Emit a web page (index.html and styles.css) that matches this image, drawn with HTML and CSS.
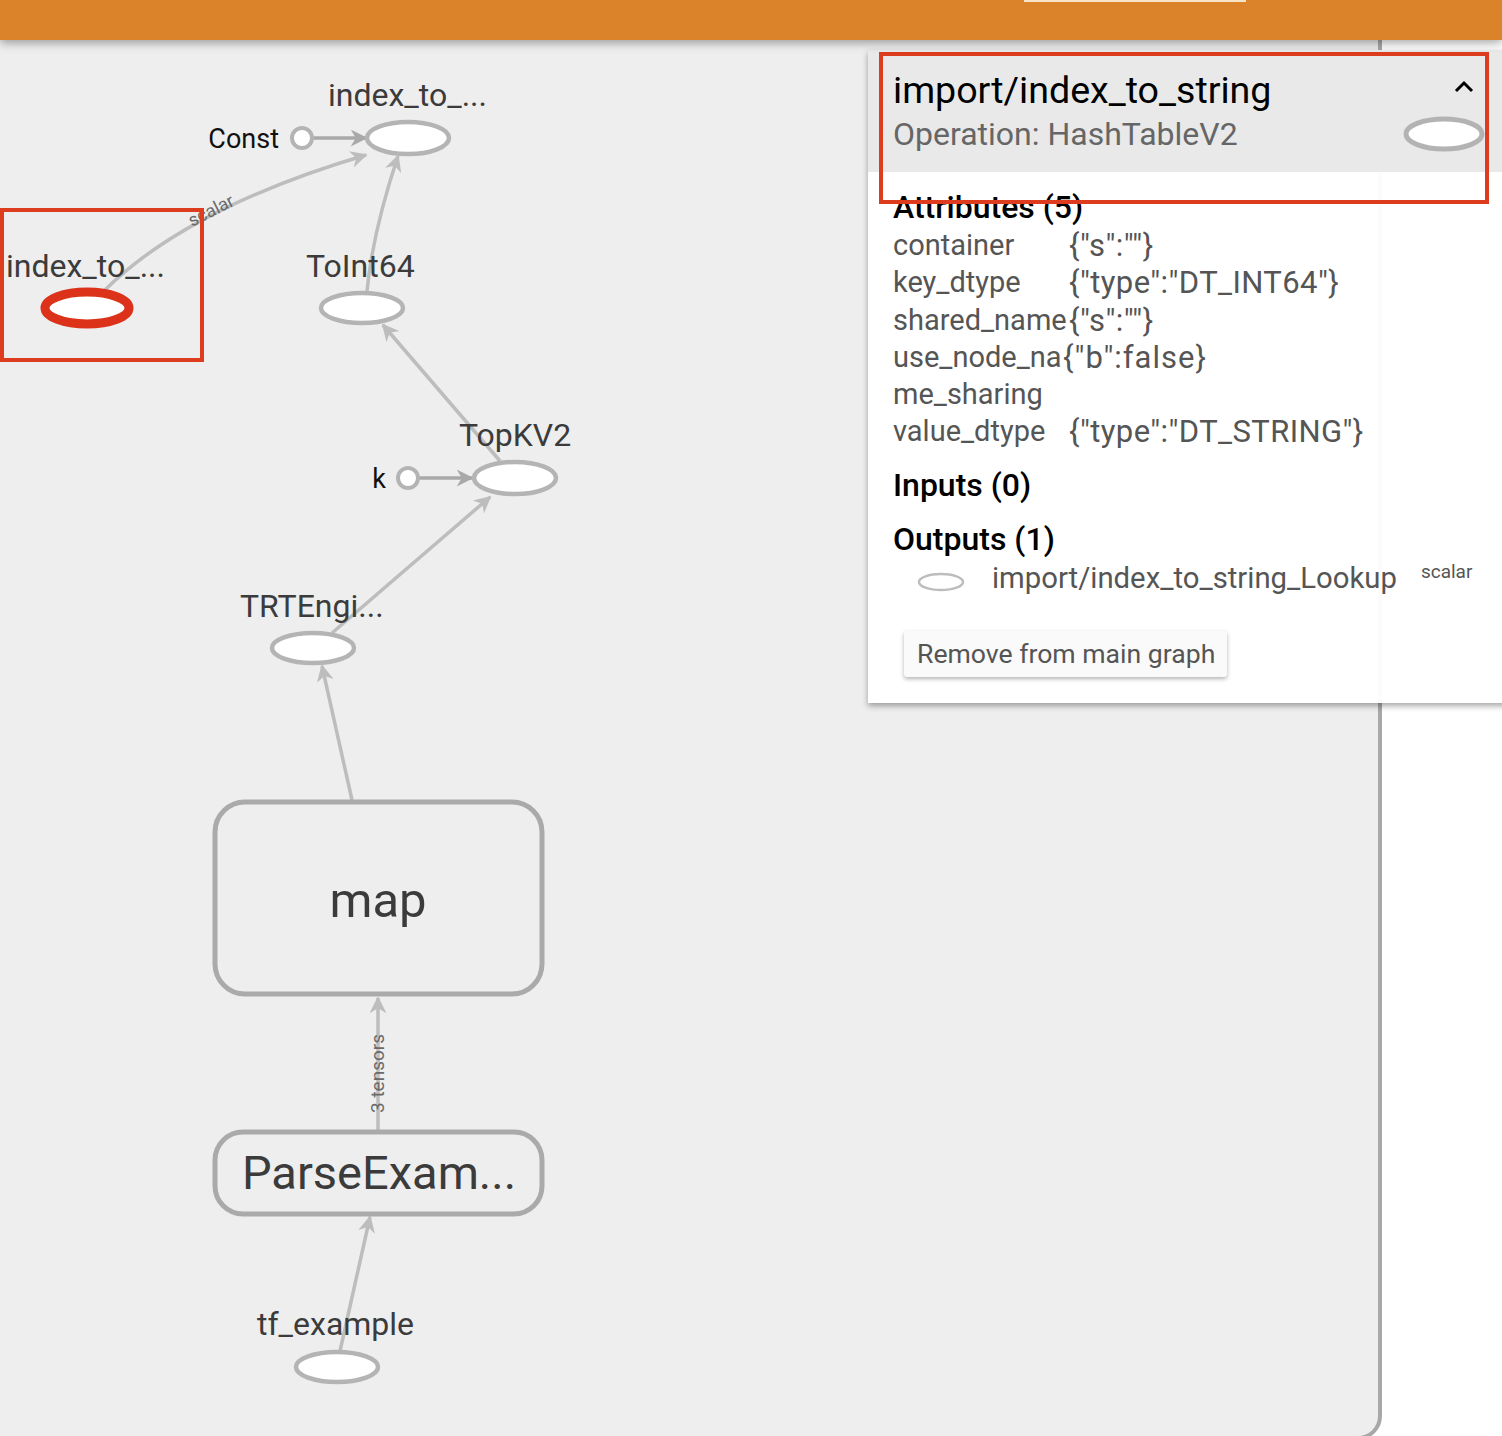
FILE: index.html
```html
<!DOCTYPE html>
<html>
<head>
<meta charset="utf-8">
<link rel="stylesheet" href="styles.css">
</head>
<body>
<div class="topbar"><div class="tab-mark"></div></div>
<div class="main">
  <div class="canvas">
    <svg class="graph" width="1378" height="1400" viewBox="0 40 1378 1400" xmlns="http://www.w3.org/2000/svg">
      <defs>
        <marker id="arr" viewBox="0 0 10 10" refX="9" refY="5" markerUnits="userSpaceOnUse" markerWidth="20" markerHeight="17" orient="auto">
          <path d="M0,0 L10,5 L0,10 L3,5 z" fill="#bdbdbd"/>
        </marker>
        <marker id="arrd" viewBox="0 0 10 10" refX="9" refY="5" markerUnits="userSpaceOnUse" markerWidth="20" markerHeight="17" orient="auto">
          <path d="M0,0 L10,5 L0,10 L3,5 z" fill="#a9a9a9"/>
        </marker>
      </defs>
      <g class="edges">
        <path d="M312,138 L366,138" class="edge dark" marker-end="url(#arrd)"/>
        <path d="M105,290 C150,245 230,195 366,155" class="edge" marker-end="url(#arr)"/>
        <path d="M367,291 C372,240 385,195 398,156" class="edge" marker-end="url(#arr)"/>
        <path d="M500,461 L383,325" class="edge" marker-end="url(#arr)"/>
        <path d="M418,478 L472,478" class="edge dark" marker-end="url(#arrd)"/>
        <path d="M332,633 L490,497" class="edge" marker-end="url(#arr)"/>
        <path d="M352,800 L322,666" class="edge" marker-end="url(#arr)"/>
        <path d="M378,1131 L378,998" class="edge" marker-end="url(#arr)"/>
        <path d="M340,1351 L370,1217" class="edge" marker-end="url(#arr)"/>
      </g>
      <text x="192" y="227" class="edge-label" transform="rotate(-27 192 227)">scalar</text>
      <text x="384" y="1113" class="edge-label tall" transform="rotate(-90 384 1113)">3 tensors</text>

      <text x="328" y="106" class="node-label">index_to_...</text>
      <ellipse cx="408" cy="138" rx="41" ry="16" class="op"/>
      <text x="279" y="148" class="const-label" text-anchor="end">Const</text>
      <circle cx="302" cy="138" r="10" class="const"/>

      <text x="6" y="277" class="node-label">index_to_...</text>
      <ellipse cx="87" cy="308" rx="42" ry="16" class="op selected"/>

      <text x="306" y="277" class="node-label">ToInt64</text>
      <ellipse cx="362" cy="308" rx="41" ry="15" class="op"/>

      <text x="459" y="446" class="node-label">TopKV2</text>
      <ellipse cx="515" cy="478" rx="41" ry="16" class="op"/>
      <text x="386" y="488" class="const-label" text-anchor="end">k</text>
      <circle cx="408" cy="478" r="10" class="const"/>

      <text x="240" y="617" class="node-label">TRTEngi...</text>
      <ellipse cx="313" cy="648" rx="41" ry="15" class="op"/>

      <rect x="215" y="802" width="327" height="192" rx="30" class="group"/>
      <text x="378" y="917" class="group-label big" text-anchor="middle">map</text>

      <rect x="215" y="1132" width="327" height="82" rx="28" class="group"/>
      <text x="379" y="1189" class="group-label" text-anchor="middle">ParseExam...</text>

      <text x="257" y="1335" class="node-label">tf_example</text>
      <ellipse cx="337" cy="1367" rx="41" ry="15" class="op"/>
    </svg>
    <div class="sel-box"></div>
  </div>
  <div class="rest"></div>

  <div class="info-panel">
    <div class="info-head">
      <div class="head-text">
        <div class="title">import/index_to_string</div>
        <div class="subtitle">Operation: HashTableV2</div>
      </div>
      <div class="head-side">
        <svg class="chevron" width="20" height="13" viewBox="0 0 20 13"><path d="M2,11 L10,3 L18,11" fill="none" stroke="#000" stroke-width="3"/></svg>
        <svg class="head-op" width="84" height="38" viewBox="0 0 84 38"><ellipse cx="42" cy="19" rx="38" ry="15" fill="#fff" stroke="#b3b3b3" stroke-width="5"/></svg>
      </div>
    </div>
    <div class="info-body">
      <div class="section-title first">Attributes (5)</div>
      <div class="attrs">
        <div class="attr-key">container</div><div class="attr-val">{"s":""}</div>
        <div class="attr-key">key_dtype</div><div class="attr-val">{"type":"DT_INT64"}</div>
        <div class="attr-key">shared_name</div><div class="attr-val">{"s":""}</div>
        <div class="attr-key">use_node_name_sharing</div><div class="attr-val tight">{"b":false}</div>
        <div class="attr-key">value_dtype</div><div class="attr-val">{"type":"DT_STRING"}</div>
      </div>
      <div class="section-title">Inputs (0)</div>
      <div class="section-title outputs">Outputs (1)</div>
      <div class="output-row">
        <svg class="out-op" width="50" height="22" viewBox="0 0 50 22"><ellipse cx="25" cy="11" rx="22" ry="8" fill="#fff" stroke="#bdbdbd" stroke-width="2.5"/></svg>
        <span class="out-name">import/index_to_string_Lookup</span>
        <span class="out-type">scalar</span>
      </div>
      <button class="remove-btn">Remove from main graph</button>
    </div>
    <div class="head-highlight"></div>
  </div>
</div>
</body>
</html>
```

FILE: styles.css
```css
html, body {
  margin: 0;
  padding: 0;
  background: #ffffff;
  font-family: Roboto, "Liberation Sans", sans-serif;
  overflow: hidden;
}

.topbar {
  height: 40px;
  background: #da832a;
  position: relative;
  z-index: 3;
  box-shadow: 0 3px 9px rgba(0, 0, 0, 0.35);
}

.tab-mark {
  position: absolute;
  left: 1024px;
  top: 0;
  width: 222px;
  height: 2px;
  background: #f7e3c6;
}

.main {
  display: flex;
  position: relative;
  height: 1396px;
}

.canvas {
  position: relative;
  width: 1378px;
  height: 1396px;
  background: #eeeeee;
  border-right: 4px solid #a8a8a8;
  border-bottom: 4px solid #a8a8a8;
  border-bottom-right-radius: 24px;
  box-sizing: content-box;
  overflow: hidden;
}

.graph {
  display: block;
}

.edge {
  fill: none;
  stroke: #bdbdbd;
  stroke-width: 3.5;
}

.edge.dark {
  stroke: #a9a9a9;
}

.edge-label {
  font-family: Roboto, "Liberation Sans", sans-serif;
  font-size: 18px;
  fill: #6a6a6a;
}

.edge-label.tall {
  font-size: 19px;
}

.node-label {
  font-family: Roboto, "Liberation Sans", sans-serif;
  font-size: 32px;
  fill: #3b3b3b;
}

.const-label {
  font-family: Roboto, "Liberation Sans", sans-serif;
  font-size: 27px;
  fill: #111111;
}

.group-label {
  font-family: Roboto, "Liberation Sans", sans-serif;
  font-size: 47px;
  fill: #3b3b3b;
}

.group-label.big {
  font-size: 49px;
}

.op {
  fill: #ffffff;
  stroke: #b4b4b4;
  stroke-width: 4.5;
}

.op.selected {
  stroke: #dc3219;
  stroke-width: 9;
}

.const {
  fill: #ffffff;
  stroke: #b4b4b4;
  stroke-width: 4;
}

.group {
  fill: none;
  stroke: #aaaaaa;
  stroke-width: 5;
}

.sel-box {
  position: absolute;
  left: 0;
  top: 168px;
  width: 196px;
  height: 146px;
  border: 4px solid #dd3d1e;
}

.rest {
  flex: 1;
  background: #ffffff;
}

.info-panel {
  position: absolute;
  left: 868px;
  top: 10px;
  width: 640px;
  background: rgba(255, 255, 255, 0.97);
  box-shadow: 0 3px 6px rgba(0, 0, 0, 0.35);
  z-index: 2;
}

.info-head {
  display: flex;
  justify-content: space-between;
  background: rgba(232, 232, 232, 0.97);
  padding: 18px 0 18px 25px;
}

.title {
  font-size: 37.6px;
  line-height: 44px;
  color: #000000;
}

.subtitle {
  font-size: 32px;
  line-height: 40px;
  margin-top: 2px;
  color: #666666;
}

.head-side {
  display: flex;
  flex-direction: column;
  align-items: flex-end;
  padding: 12px 22px 0 0;
}

.chevron {
  display: block;
  margin-right: 12px;
}

.head-op {
  display: block;
  margin-top: 22px;
}

.head-highlight {
  position: absolute;
  left: 11px;
  top: 2px;
  width: 602px;
  height: 144px;
  border: 4px solid #dd3d1e;
  pointer-events: none;
}

.info-body {
  padding: 0 0 26px 25px;
}

.section-title {
  font-size: 32px;
  line-height: 36px;
  font-weight: 500;
  color: #000000;
  margin-top: 16px;
}

.section-title.first {
  margin-top: 17px;
}

.section-title.outputs {
  margin-top: 18px;
}

.attrs {
  display: grid;
  grid-template-columns: 176px auto;
  justify-content: start;
  align-items: start;
  font-size: 29px;
  line-height: 37.3px;
  color: #555555;
  margin-top: 2px;
}

.attr-key {
  word-break: break-all;
}

.attr-val {
  font-size: 31px;
  line-height: 37.3px;
  letter-spacing: 0.4px;
}

.attr-val.tight {
  margin-left: -6px;
  letter-spacing: 1px;
}

.output-row {
  display: flex;
  align-items: flex-start;
  margin-top: 3px;
  color: #555555;
}

.out-op {
  display: block;
  margin: 11px 0 0 23px;
}

.out-name {
  font-size: 29.3px;
  line-height: 36px;
  margin-left: 26px;
}

.out-type {
  font-size: 19px;
  line-height: 24px;
  margin-left: 24px;
}

.remove-btn {
  display: block;
  margin: 35px 0 0 11px;
  height: 46px;
  padding: 0 12px 0 13px;
  font-family: Roboto, "Liberation Sans", sans-serif;
  font-size: 26.6px;
  color: #555555;
  background: #fafafa;
  border: none;
  border-radius: 3px;
  box-shadow: 0 2px 4px rgba(0, 0, 0, 0.3);
}
```
